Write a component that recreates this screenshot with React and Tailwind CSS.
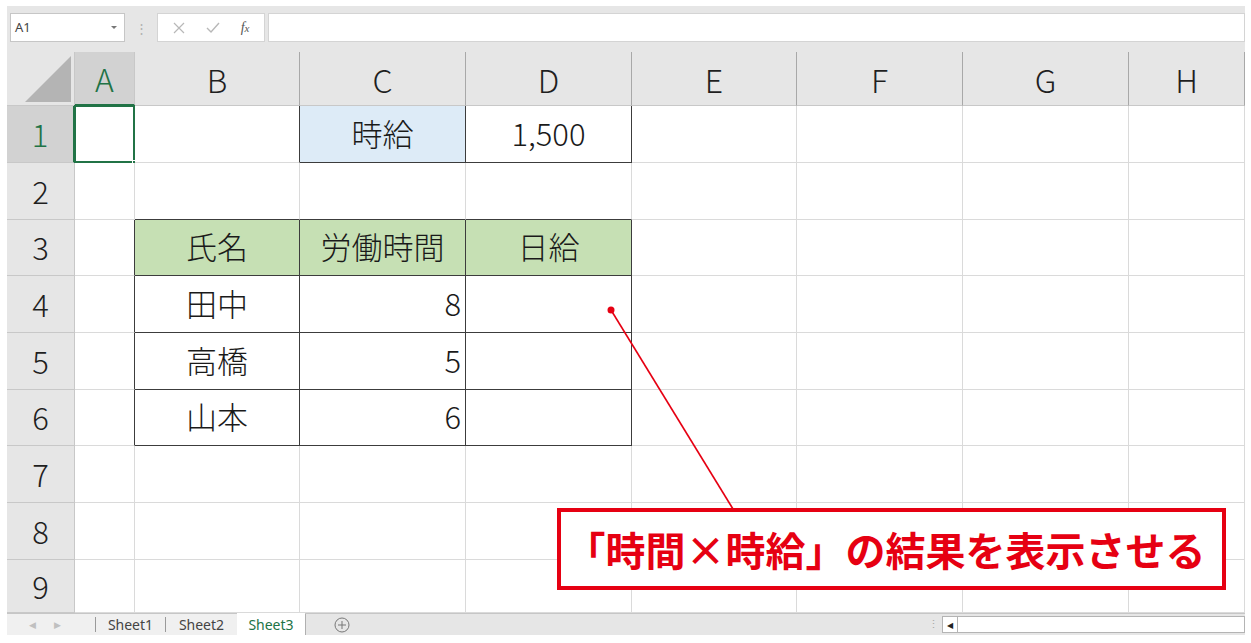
import React from "react";

const FONT = { fontFamily: '"Noto Sans CJK JP", "Noto Sans", sans-serif' };
const UI = { fontFamily: '"Noto Sans", "Liberation Sans", sans-serif' };

const colWidths = [60, 165, 166, 166, 165, 166, 166, 116];
const colNames = ["A", "B", "C", "D", "E", "F", "G", "H"];
const rowHeights = [57, 57, 56, 57, 57, 56, 57, 57, 53];

// cell contents: key = "row-col" (A = 1)
const cells = {
  "1-3": { text: "時給", align: "center", bg: "bg-[#ddebf7]" },
  "1-4": { text: "1,500", align: "center" },
  "3-2": { text: "氏名", align: "center", bg: "bg-[#c6e0b4]" },
  "3-3": { text: "労働時間", align: "center", bg: "bg-[#c6e0b4]" },
  "3-4": { text: "日給", align: "center", bg: "bg-[#c6e0b4]" },
  "4-2": { text: "田中", align: "center" },
  "4-3": { text: "8", align: "right" },
  "5-2": { text: "高橋", align: "center" },
  "5-3": { text: "5", align: "right" },
  "6-2": { text: "山本", align: "center" },
  "6-3": { text: "6", align: "right" },
};

const inTable = (r, c) =>
  (r === 1 && c >= 3 && c <= 4) || (r >= 3 && r <= 6 && c >= 2 && c <= 4);

function Cell({ r, c, w }) {
  const data = cells[`${r}-${c}`];
  const rightDark = inTable(r, c) || inTable(r, c + 1);
  const bottomDark = inTable(r, c) || inTable(r + 1, c);
  const selected = r === 1 && c === 1;

  return (
    <div
      style={{ width: w }}
      className={`relative shrink-0 h-full border-r border-b ${
        rightDark ? "border-r-[#3c3c3c]" : "border-r-[#dadada]"
      } ${bottomDark ? "border-b-[#3c3c3c]" : "border-b-[#dadada]"} ${
        data?.bg || "bg-white"
      } flex items-center pb-[4px] ${
        data?.align === "right" ? "justify-end pr-[4px]" : "justify-center"
      } text-[31px] font-light text-[#1a1a1a] leading-none`}
    >
      {data?.text}
      {selected && (
        <>
          <div className="absolute -left-px -top-px -right-px -bottom-px border-2 border-[#217346]" />
          <div className="absolute -right-[4px] -bottom-[4px] w-[6px] h-[6px] bg-[#217346] border border-white" />
        </>
      )}
    </div>
  );
}

function App() {
  return (
    <div
      className="relative w-[1251px] h-[643px] bg-white overflow-hidden"
      style={FONT}
    >
      <div className="pt-[6px] pl-[7px] pr-[6px]">
        {/* Formula bar */}
        <div className="h-[46px] bg-[#e6e6e6] flex items-start pt-[7px]">
          <div className="ml-[3px] w-[115px] h-[29px] bg-white border border-[#c6c6c6] flex items-center justify-between px-[4px]">
            <span className="text-[13px] text-[#444]" style={UI}>
              A1
            </span>
            <svg width="8" height="5" viewBox="0 0 8 5" className="mr-[2px]">
              <path d="M1 1 L4 4 L7 1 Z" fill="#777" />
            </svg>
          </div>
          <div className="w-[32px] h-[29px] flex items-center justify-center text-[#b0b0b0] text-[13px]">
            ⋮
          </div>
          <div className="w-[108px] h-[29px] bg-white border border-[#d4d4d4] flex items-center justify-around px-[4px]">
            <svg width="12" height="12" viewBox="0 0 12 12">
              <path d="M1 1 L11 11 M11 1 L1 11" stroke="#b8b8b8" strokeWidth="1.2" />
            </svg>
            <svg width="14" height="12" viewBox="0 0 14 12">
              <path d="M1 6 L5 10 L13 1" stroke="#b8b8b8" strokeWidth="1.4" fill="none" />
            </svg>
            <span
              className="text-[14px] italic text-[#555]"
              style={{ fontFamily: '"Liberation Serif", serif' }}
            >
              f<span className="text-[11px]">x</span>
            </span>
          </div>
          <div className="ml-[3px] flex-1 h-[29px] bg-white border border-[#d4d4d4]" />
        </div>

        {/* Column headers */}
        <div className="flex h-[54px]">
          <div className="relative w-[68px] shrink-0 bg-[#e6e6e6] border-r border-b border-[#c8c8c8]">
            <div
              className="absolute right-[3px] bottom-[3px] w-[46px] h-[46px] bg-[#b4b4b4]"
              style={{ clipPath: "polygon(100% 0, 100% 100%, 0 100%)" }}
            />
          </div>
          {colNames.map((n, i) => (
            <div
              key={n}
              style={{ width: colWidths[i] }}
              className={`shrink-0 flex items-center justify-center text-[32px] font-light border-r ${
                i === 0
                  ? "bg-[#d2d2d2] text-[#217346] border-r-[#c8c8c8] border-b-2 border-b-[#217346]"
                  : "bg-[#e6e6e6] text-[#1f1f1f] border-r-[#a8a8a8] border-b border-b-[#c8c8c8]"
              }`}
            >
              {n}
            </div>
          ))}
        </div>

        {/* Rows */}
        {rowHeights.map((h, ri) => {
          const r = ri + 1;
          return (
            <div key={r} className="flex" style={{ height: h }}>
              <div
                className={`w-[68px] shrink-0 h-full flex items-center justify-center text-[31px] font-light border-b ${
                  r === 1
                    ? "bg-[#d2d2d2] text-[#217346] border-r-2 border-r-[#217346] border-b-[#c8c8c8]"
                    : "bg-[#e6e6e6] text-[#1f1f1f] border-r border-r-[#c8c8c8] border-b-[#c8c8c8]"
                }`}
              >
                {r}
              </div>
              {colWidths.map((w, ci) => (
                <Cell key={ci} r={r} c={ci + 1} w={w} />
              ))}
            </div>
          );
        })}

        {/* Sheet tabs */}
        <div
          className="h-[22px] flex items-stretch bg-[#f0f0f0] border-t border-[#c6c6c6] text-[14px]"
          style={UI}
        >
          <div className="w-[88px] flex items-center gap-[18px] pl-[22px] text-[9px] text-[#c0c0c0]">
            <span>◀</span>
            <span>▶</span>
          </div>
          <div className="border-l border-[#9a9a9a] my-[3px]" />
          <div className="w-[69px] flex items-center justify-center text-[#444]">
            Sheet1
          </div>
          <div className="border-l border-[#9a9a9a] my-[3px]" />
          <div className="w-[71px] flex items-center justify-center text-[#444]">
            Sheet2
          </div>
          <div className="w-[68px] -mt-px bg-white flex items-center justify-center text-[#217346]">
            Sheet3
          </div>
          <div className="w-[620px] bg-[#e6e6e6] border-l border-[#b0b0b0] flex items-center pl-[28px]">
            <svg width="16" height="16" viewBox="0 0 16 16">
              <circle cx="8" cy="8" r="7" stroke="#777" strokeWidth="1" fill="none" />
              <path d="M8 4 V12 M4 8 H12" stroke="#777" strokeWidth="1" />
            </svg>
          </div>
          <div className="w-[17px] bg-[#e6e6e6] flex items-center justify-center text-[#a8a8a8] text-[11px]">
            ⋮
          </div>
          <div className="flex-1 bg-[#e6e6e6] py-[2px] flex">
            <div className="flex-1 flex bg-white border border-[#b4b4b4]">
              <div className="w-[15px] flex items-center justify-center border-r border-[#b4b4b4] text-[8px] text-[#222]">
                ◀
              </div>
            </div>
          </div>
        </div>
      </div>

      {/* Callout line */}
      <svg
        className="absolute left-0 top-0 pointer-events-none"
        width="1251"
        height="643"
      >
        <line x1="611" y1="310" x2="733" y2="509" stroke="#e60012" strokeWidth="1.6" />
        <circle cx="611" cy="310" r="3.5" fill="#e60012" />
      </svg>

      {/* Callout box */}
      <div className="absolute left-[557px] top-[508px] w-[669px] h-[82px] bg-white border-[4px] border-[#e60012] flex items-center justify-center">
        <span className="text-[40px] font-bold text-[#e60012] leading-none -ml-[12px]">
          「時間×時給」の結果を表示させる
        </span>
      </div>
    </div>
  );
}

export default App;
